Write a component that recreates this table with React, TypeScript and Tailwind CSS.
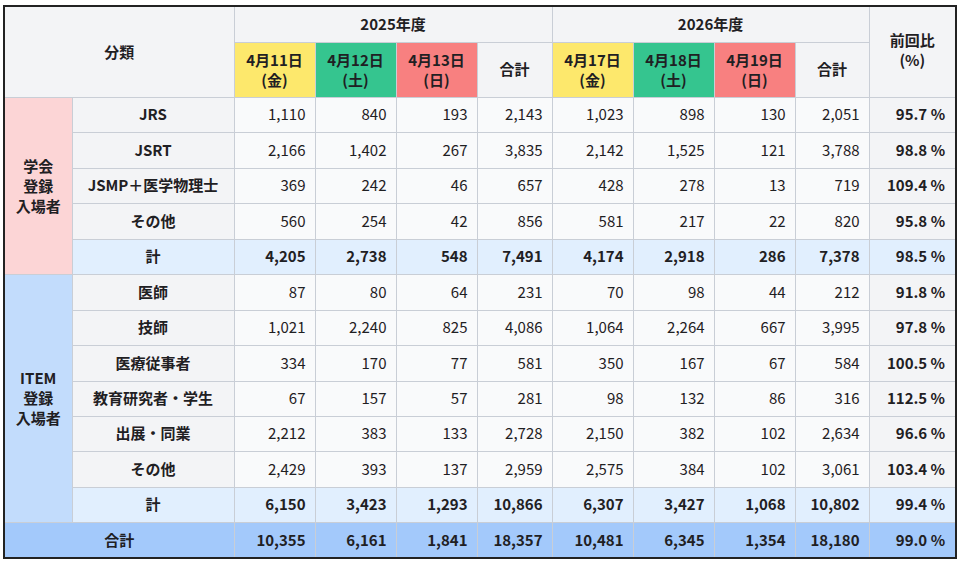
import React from "react";

type Row = { label: string; v: number[]; ratio: string };

const gakkai: Row[] = [
  { label: "JRS", v: [1110, 840, 193, 2143, 1023, 898, 130, 2051], ratio: "95.7 %" },
  { label: "JSRT", v: [2166, 1402, 267, 3835, 2142, 1525, 121, 3788], ratio: "98.8 %" },
  { label: "JSMP＋医学物理士", v: [369, 242, 46, 657, 428, 278, 13, 719], ratio: "109.4 %" },
  { label: "その他", v: [560, 254, 42, 856, 581, 217, 22, 820], ratio: "95.8 %" },
];
const gakkaiSum: Row = { label: "計", v: [4205, 2738, 548, 7491, 4174, 2918, 286, 7378], ratio: "98.5 %" };

const item: Row[] = [
  { label: "医師", v: [87, 80, 64, 231, 70, 98, 44, 212], ratio: "91.8 %" },
  { label: "技師", v: [1021, 2240, 825, 4086, 1064, 2264, 667, 3995], ratio: "97.8 %" },
  { label: "医療従事者", v: [334, 170, 77, 581, 350, 167, 67, 584], ratio: "100.5 %" },
  { label: "教育研究者・学生", v: [67, 157, 57, 281, 98, 132, 86, 316], ratio: "112.5 %" },
  { label: "出展・同業", v: [2212, 383, 133, 2728, 2150, 382, 102, 2634], ratio: "96.6 %" },
  { label: "その他", v: [2429, 393, 137, 2959, 2575, 384, 102, 3061], ratio: "103.4 %" },
];
const itemSum: Row = { label: "計", v: [6150, 3423, 1293, 10866, 6307, 3427, 1068, 10802], ratio: "99.4 %" };
const total: Row = { label: "合計", v: [10355, 6161, 1841, 18357, 10481, 6345, 1354, 18180], ratio: "99.0 %" };

const heights = ["h-[35px]", "h-[36px]", "h-[35px]", "h-[36px]", "h-[35px]", "h-[36px]", "h-[35px]", "h-[36px]", "h-[35px]", "h-[35px]", "h-[36px]", "h-[35px]", "h-[35px]"];

const fmt = (n: number) => n.toLocaleString("en-US");
const cell = "border border-[#c9ced6]";

const DayHead = ({ date, dow, bg }: { date: string; dow: string; bg: string }) => (
  <th className={`${cell} ${bg} font-bold leading-[20px]`}>
    {date}
    <br />({dow})
  </th>
);

const DataRow = ({ row, h, lead, sum }: { row: Row; h: string; lead?: React.ReactNode; sum?: boolean }) => (
  <tr className={h}>
    {lead}
    <td className={`${cell} text-center font-bold ${sum ? "bg-[#e1effe]" : "bg-[#f3f4f6]"}`}>{row.label}</td>
    {row.v.map((n, i) => (
      <td key={i} className={`${cell} text-right pr-[9px] ${sum ? "bg-[#e1effe] font-bold" : "bg-[#f9fafb]"}`}>
        {fmt(n)}
      </td>
    ))}
    <td className={`${cell} text-right pr-[10px] font-bold ${sum ? "bg-[#e1effe]" : "bg-[#f3f4f6]"}`}>{row.ratio}</td>
  </tr>
);

export default function App() {
  return (
    <div className="w-[963px] h-[564px] bg-white pl-[3px] pt-[5px] text-[#1f2023] text-[15px]" style={{ fontFamily: '"Noto Sans CJK JP", "Noto Sans", sans-serif' }}>
      <div className="w-[954px] border-2 border-[#222]">
        <table className="w-[950px] table-fixed border-collapse border-hidden">
          <colgroup>
            <col className="w-[67px]" />
            <col className="w-[162px]" />
            <col className="w-[81px]" />
            <col className="w-[81px]" />
            <col className="w-[81px]" />
            <col className="w-[75px]" />
            <col className="w-[81px]" />
            <col className="w-[81px]" />
            <col className="w-[81px]" />
            <col className="w-[74px]" />
            <col className="w-[86px]" />
          </colgroup>
          <thead>
            <tr className="h-[35px] bg-[#f3f4f6]">
              <th rowSpan={2} colSpan={2} className={`${cell} font-bold`}>分類</th>
              <th colSpan={4} className={`${cell} font-bold`}>2025年度</th>
              <th colSpan={4} className={`${cell} font-bold`}>2026年度</th>
              <th rowSpan={2} className={`${cell} font-bold leading-[20px] pb-[3px]`}>
                前回比
                <br />(%)
              </th>
            </tr>
            <tr className="h-[55px] bg-[#f3f4f6]">
              <DayHead date="4月11日" dow="金" bg="bg-[#fde86c]" />
              <DayHead date="4月12日" dow="土" bg="bg-[#35c58f]" />
              <DayHead date="4月13日" dow="日" bg="bg-[#f88080]" />
              <th className={`${cell} font-bold`}>合計</th>
              <DayHead date="4月17日" dow="金" bg="bg-[#fde86c]" />
              <DayHead date="4月18日" dow="土" bg="bg-[#35c58f]" />
              <DayHead date="4月19日" dow="日" bg="bg-[#f88080]" />
              <th className={`${cell} font-bold`}>合計</th>
            </tr>
          </thead>
          <tbody>
            {gakkai.map((r, i) => (
              <DataRow
                key={r.label + i}
                row={r}
                h={heights[i]}
                lead={
                  i === 0 ? (
                    <td rowSpan={5} className={`${cell} bg-[#fcd5d6] text-center font-bold leading-[20px]`}>
                      学会
                      <br />
                      登録
                      <br />
                      入場者
                    </td>
                  ) : undefined
                }
              />
            ))}
            <DataRow row={gakkaiSum} h={heights[4]} sum />
            {item.map((r, i) => (
              <DataRow
                key={r.label + "i" + i}
                row={r}
                h={heights[5 + i]}
                lead={
                  i === 0 ? (
                    <td rowSpan={7} className={`${cell} bg-[#c2dcfc] text-center font-bold leading-[20px]`}>
                      ITEM
                      <br />
                      登録
                      <br />
                      入場者
                    </td>
                  ) : undefined
                }
              />
            ))}
            <DataRow row={itemSum} h={heights[11]} sum />
            <tr className={`${heights[12]} bg-[#a3c9fb] font-bold`}>
              <td colSpan={2} className={`${cell} text-center`}>{total.label}</td>
              {total.v.map((n, i) => (
                <td key={i} className={`${cell} text-right pr-[9px]`}>{fmt(n)}</td>
              ))}
              <td className={`${cell} text-right pr-[10px]`}>{total.ratio}</td>
            </tr>
          </tbody>
        </table>
      </div>
    </div>
  );
}
